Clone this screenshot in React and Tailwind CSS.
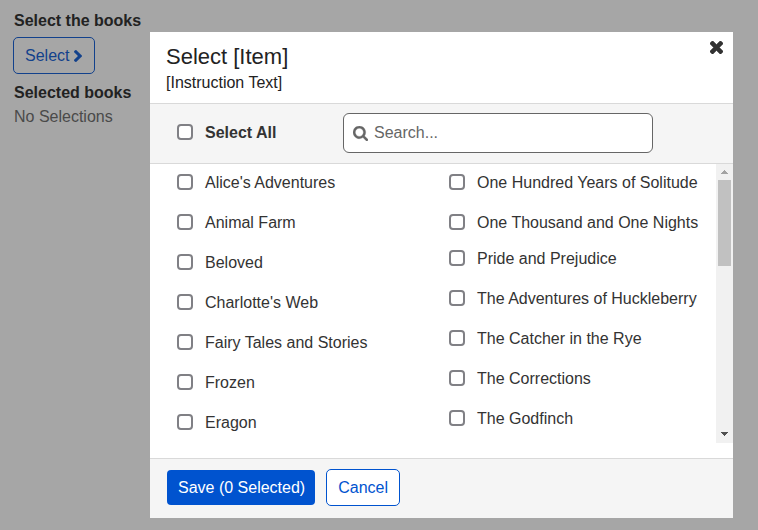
const leftBooks = [
  "Alice's Adventures",
  'Animal Farm',
  'Beloved',
  "Charlotte's Web",
  'Fairy Tales and Stories',
  'Frozen',
  'Eragon',
];

const rightBooks = [
  'One Hundred Years of Solitude',
  'One Thousand and One Nights',
  'Pride and Prejudice',
  'The Adventures of Huckleberry',
  'The Catcher in the Rye',
  'The Corrections',
  'The Godfinch',
];

function ChevronIcon() {
  return (
    <svg className="h-3 w-2" viewBox="346 26 1036 1612" preserveAspectRatio="none" fill="currentColor" stroke="currentColor" strokeWidth="60" aria-hidden="true">
      <path d="M1363 877l-742 742q-19 19-45 19t-45-19l-166-166q-19-19-19-45t19-45l531-531-531-531q-19-19-19-45t19-45l166-166q19-19 45-19t45 19l742 742q19 19 19 45t-19 45z" />
    </svg>
  );
}

function CloseIcon() {
  return (
    <svg className="h-[13px] w-[13px]" viewBox="302 366 1188 1188" fill="currentColor" stroke="currentColor" strokeWidth="40" aria-hidden="true">
      <path d="M1490 1322q0 40-28 68l-136 136q-28 28-68 28t-68-28l-294-294-294 294q-28 28-68 28t-68-28l-136-136q-28-28-28-68t28-68l294-294-294-294q-28-28-28-68t28-68l136-136q28-28 68-28t68 28l294 294 294-294q28-28 68-28t68 28l136 136q28 28 28 68t-28 68l-294 294 294 294q28 28 28 68z" />
    </svg>
  );
}

function SearchIcon() {
  return (
    <svg className="mt-px h-[15px] w-[15px] shrink-0" viewBox="64 128 1664 1664" fill="currentColor" stroke="currentColor" strokeWidth="30" aria-hidden="true">
      <path d="M1216 832q0-185-131.5-316.5t-316.5-131.5-316.5 131.5-131.5 316.5 131.5 316.5 316.5 131.5 316.5-131.5 131.5-316.5zm512 832q0 52-38 90t-90 38q-54 0-90-38l-343-342q-179 124-399 124-143 0-273.5-55.5t-225-150-150-225-55.5-273.5 55.5-273.5 150-225 225-150 273.5-55.5 273.5 55.5 225 150 150 225 55.5 273.5q0 220-124 399l343 343q37 37 37 90z" />
    </svg>
  );
}

function CheckBox() {
  return (
    <input
      type="checkbox"
      className="mb-0.5 h-4 w-4 shrink-0 appearance-none rounded border-2 border-[#808085] bg-white checked:border-[#0053cf] checked:bg-[#0053cf]"
    />
  );
}

function BookList({ books, tightAfter }) {
  return (
    <ul className="pt-px">
      {books.map((book, i) => (
        <li key={book} className={i === tightAfter ? 'h-9' : 'h-10'}>
          <label className="flex h-9 items-center gap-3 whitespace-nowrap">
            <CheckBox />
            {book}
          </label>
        </li>
      ))}
    </ul>
  );
}

export default function App() {
  return (
    <div className="relative min-h-screen bg-[#a6a6a6] font-['Liberation_Sans',Arial,sans-serif] text-base text-[#333]">
      <main className="px-[13px] pt-[9px] text-[#222]">
        <h2 className="pl-px font-bold">Select the books</h2>
        <button
          type="button"
          className="mt-1 flex h-[37px] items-center gap-[5px] rounded-[5px] border border-[#12418c] pr-3 pl-[11px] text-[#12418c]"
        >
          Select
          <ChevronIcon />
        </button>
        <h2 className="mt-[7px] pl-px leading-6 font-bold">Selected books</h2>
        <p className="pl-px leading-[23px] text-[#4a4a4a]">No Selections</p>
      </main>

      <div className="absolute inset-0 pt-8 pr-[25px] pb-3 pl-[150px]">
        <div role="dialog" aria-labelledby="dialog-title" className="flex flex-col bg-white">
          <header className="flex items-start justify-between border-b border-[#d9d9d9] pt-2 pr-2.5 pb-2 pl-4 text-[#222]">
            <div className="pt-1">
              <h1 id="dialog-title" className="text-[22px] leading-[26px]">Select [Item]</h1>
              <p className="leading-[25px]">[Instruction Text]</p>
            </div>
            <button type="button" aria-label="Close" className="mt-px text-[#333]">
              <CloseIcon />
            </button>
          </header>

          <div className="flex items-center border-b border-[#d9d9d9] bg-[#f5f5f5] pt-[9px] pr-20 pb-2.5 pl-[27px]">
            <label className="flex w-[166px] shrink-0 items-center gap-3 font-bold">
              <CheckBox />
              Select All
            </label>
            <label className="flex h-10 min-w-0 flex-1 items-center gap-1.5 rounded-md border border-[#666] bg-white px-[9px] text-[#666]">
              <SearchIcon />
              <input
                type="text"
                aria-label="Search"
                placeholder="Search..."
                className="min-w-0 flex-1 bg-transparent outline-none placeholder:text-[#666]"
              />
            </label>
          </div>

          <div className="flex h-[279px] overflow-hidden">
            <div className="grid flex-1 grid-cols-2 gap-[5px] pl-[27px]">
              <BookList books={leftBooks} />
              <BookList books={rightBooks} tightAfter={1} />
            </div>
            <div aria-hidden="true" className="flex w-[17px] shrink-0 flex-col items-center justify-between bg-[#f1f1f1] pb-[7px]">
              <div className="flex flex-col items-center">
                <div className="flex h-4 items-center">
                  <svg className="h-1 w-[7px]" viewBox="0 0 7 4" fill="#a3a3a3" shapeRendering="crispEdges">
                    <path d="M0 4 3.5 0 7 4z" />
                  </svg>
                </div>
                <div className="h-[86px] w-[13px] bg-[#c1c1c1]" />
              </div>
              <svg className="h-1 w-[7px]" viewBox="0 0 7 4" fill="#505050" shapeRendering="crispEdges">
                <path d="M0 0h7L3.5 4z" />
              </svg>
            </div>
          </div>

          <footer className="mt-[15px] flex items-center gap-[11px] border-t border-[#d9d9d9] bg-[#f5f5f5] pt-2.5 pr-4 pb-3 pl-[17px]">
            <button type="button" className="h-[35px] rounded bg-[#0053cf] pr-2.5 pl-[11px] text-white">
              Save (0 Selected)
            </button>
            <button type="button" className="h-[37px] rounded-[5px] border border-[#0053cf] bg-white px-[11px] text-[#0053cf]">
              Cancel
            </button>
          </footer>
        </div>
      </div>
    </div>
  );
}
